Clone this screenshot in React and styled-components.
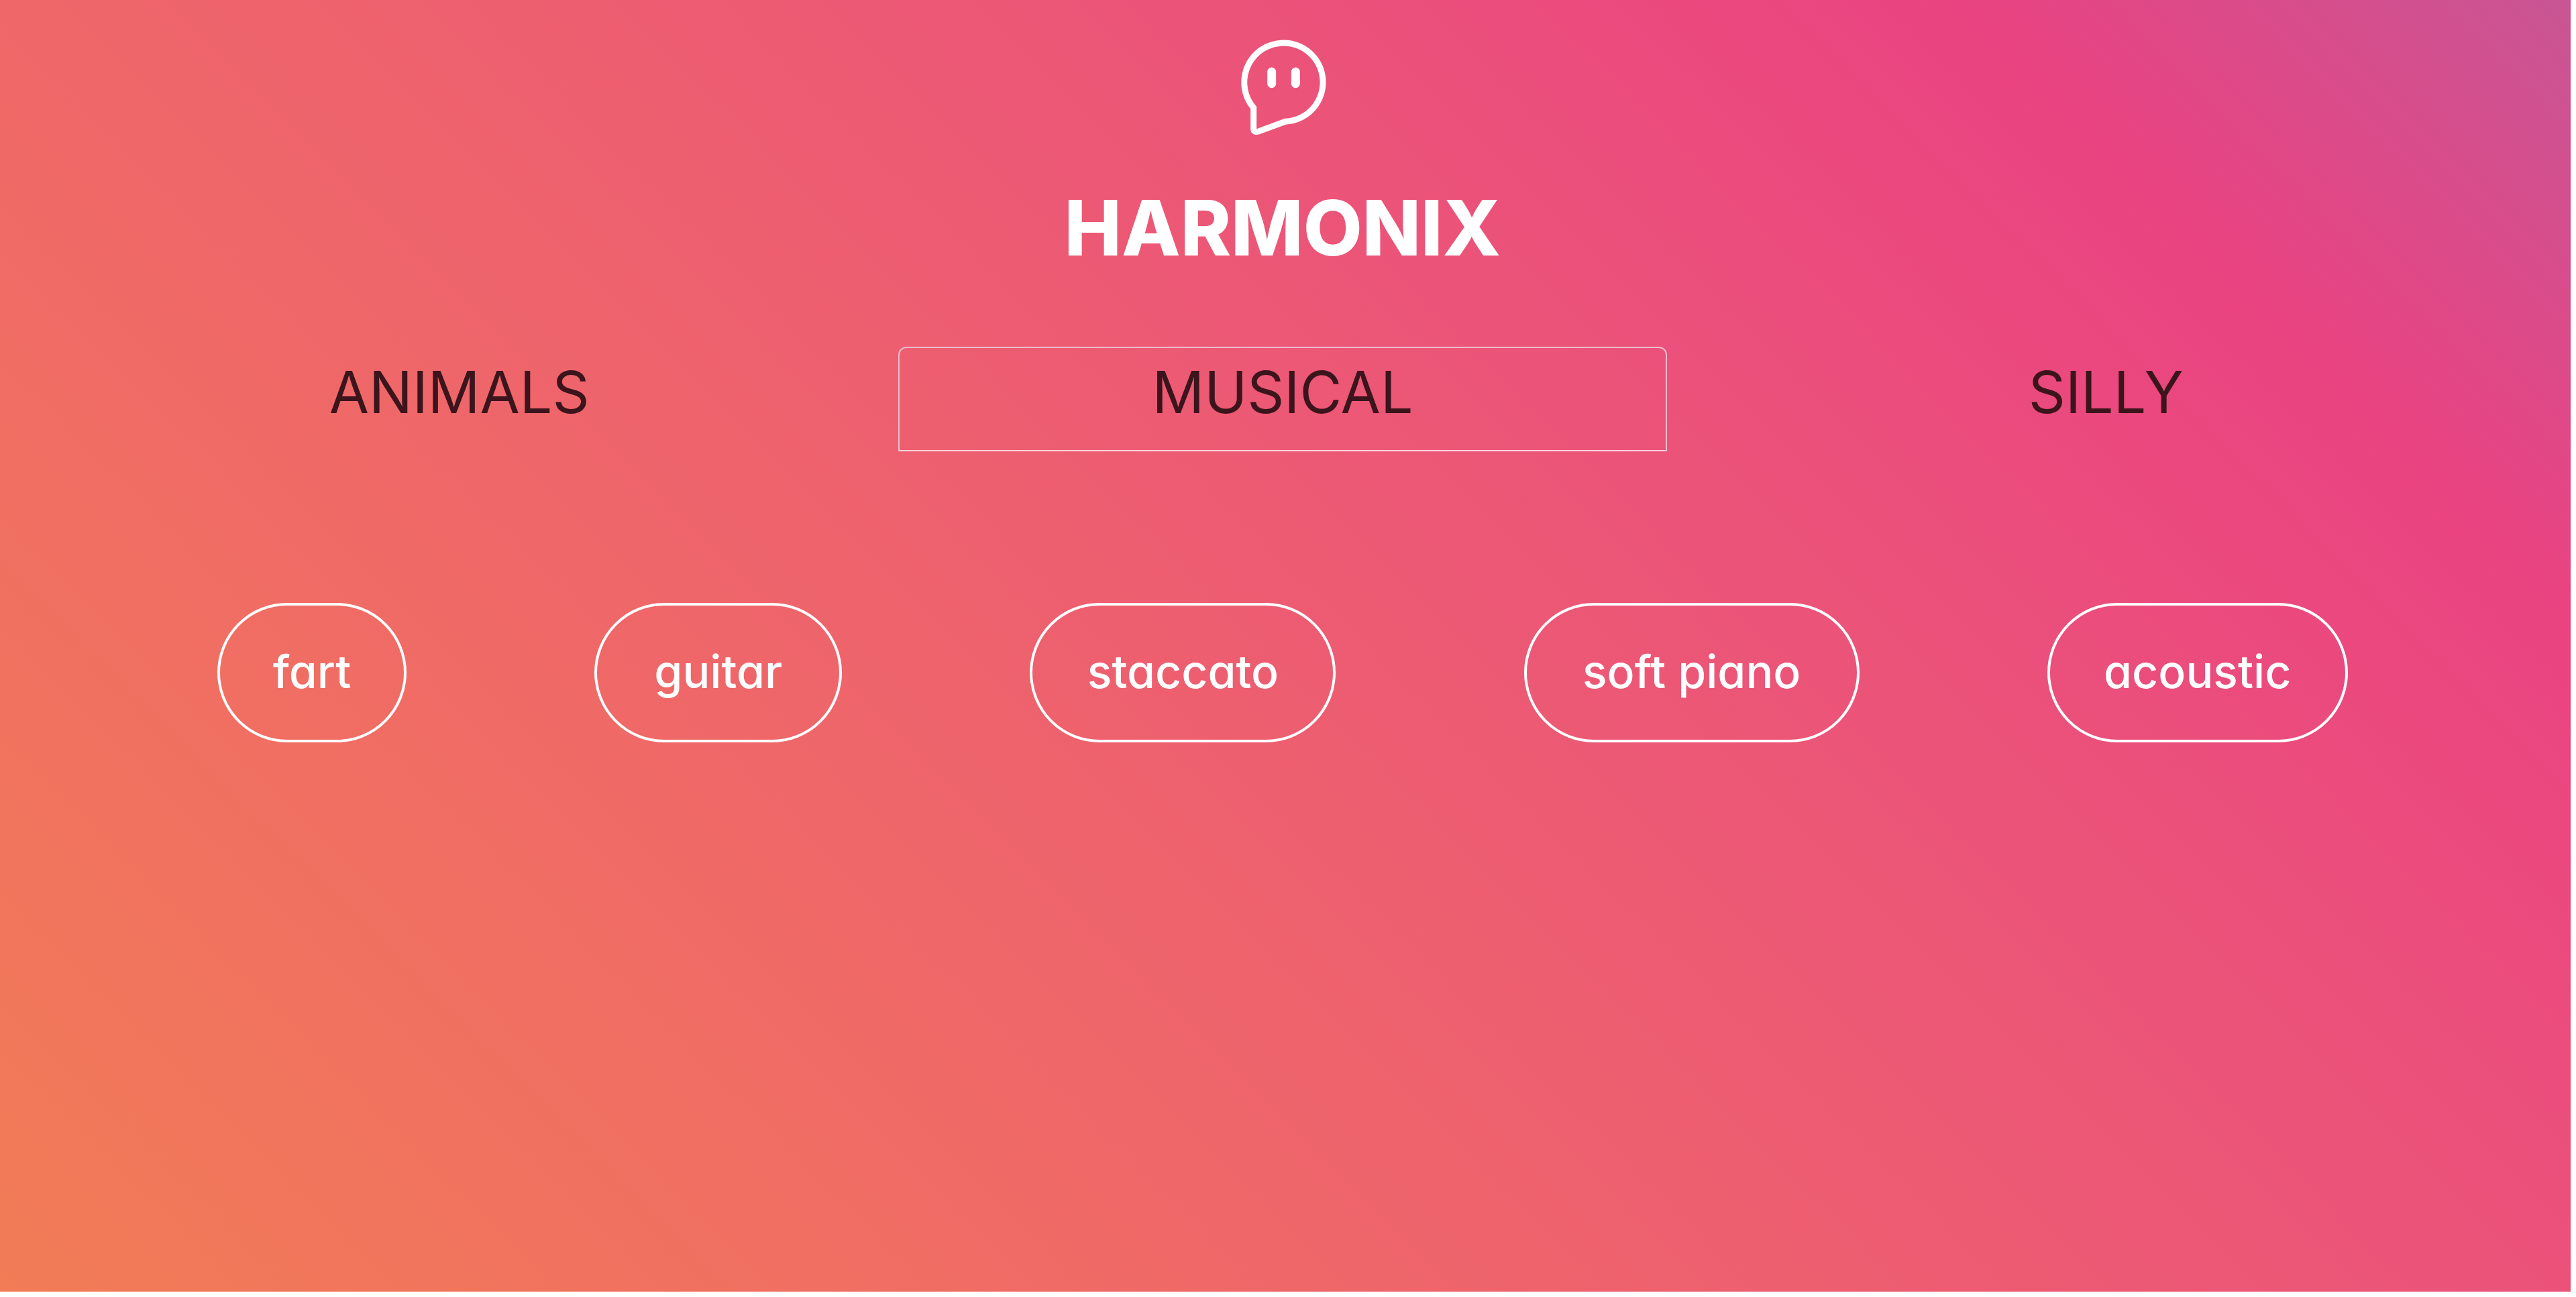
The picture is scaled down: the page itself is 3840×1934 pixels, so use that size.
import React, { useState } from "react";
import styled, { createGlobalStyle } from "styled-components";

const GlobalStyle = createGlobalStyle`
  *, *::before, *::after { box-sizing: border-box; }
  body { margin: 0; background: #fff; }
`;

const Page = styled.main`
  display: flex;
  flex-direction: column;
  min-height: calc(100vh - 8px);
  margin: 0 8px 8px 0;
  padding: 56px 8px 56px 0;
  background: linear-gradient(45deg, #f27c56 0%, #ef6769 34%, #eb5379 65%, #ea4381 84%, #c85594 100%);
  color: #fff;
  font-family: Inter, "Liberation Sans", sans-serif;
  font-feature-settings: "cv11";
`;

const Header = styled.header`
  display: flex;
  flex-direction: column;
  align-items: center;
  gap: 72px;
`;

const Logo = styled.svg`
  width: 136px;
  height: 148px;
`;

const Title = styled.h1`
  margin: 0;
  font-size: 114px;
  font-weight: 800;
  line-height: 128px;
`;

const Tabs = styled.nav`
  display: grid;
  grid-template-columns: repeat(3, 1fr);
  gap: 82px;
  margin-top: 113px;
  padding: 0 112px;
`;

const Tab = styled.button`
  height: 156px;
  padding: 0 0 20px;
  border: 2px solid ${(p) => (p.$active ? "#e9bccb" : "transparent")};
  border-bottom-color: ${(p) => (p.$active ? "#fbd3dd" : "transparent")};
  border-radius: 12px 12px 0 0;
  background: none;
  color: #3b141c;
  font: inherit;
  font-size: 86px;
  line-height: 96px;
  cursor: pointer;
`;

const Sounds = styled.section`
  display: flex;
  flex-wrap: wrap;
  justify-content: space-evenly;
  margin-top: 226px;
  padding: 0 44px;
`;

const Sound = styled.button`
  width: ${(p) => p.$width}px;
  height: 208px;
  padding: 0 0 4px;
  border: 4px solid #fff;
  border-radius: 104px;
  background: none;
  color: #fff;
  font: inherit;
  font-size: 68px;
  font-weight: 500;
  line-height: 80px;
  white-space: nowrap;
  cursor: pointer;
`;

const categories = ["ANIMALS", "MUSICAL", "SILLY"];
const sounds = [
  { name: "fart", width: 282 },
  { name: "guitar", width: 369 },
  { name: "staccato", width: 456 },
  { name: "soft piano", width: 500 },
  { name: "acoustic", width: 448 },
];

export default function App() {
  const [active, setActive] = useState("MUSICAL");
  return (
    <>
      <GlobalStyle />
      <Page>
        <Header>
          <Logo viewBox="72 48 408 444" fill="none" stroke="#fff" aria-hidden="true">
            <path
              d="M146 362 A176 176 0 1 1 288 424 L168 468 Q146 474 146 456 Z"
              strokeWidth="27"
            />
            <path d="M227 201 V254 M334 201 V254" strokeWidth="39" strokeLinecap="round" />
          </Logo>
          <Title>HARMONIX</Title>
        </Header>
        <Tabs>
          {categories.map((name) => (
            <Tab key={name} $active={name === active} onClick={() => setActive(name)}>
              {name}
            </Tab>
          ))}
        </Tabs>
        <Sounds>
          {sounds.map((sound) => (
            <Sound key={sound.name} $width={sound.width}>
              {sound.name}
            </Sound>
          ))}
        </Sounds>
      </Page>
    </>
  );
}
